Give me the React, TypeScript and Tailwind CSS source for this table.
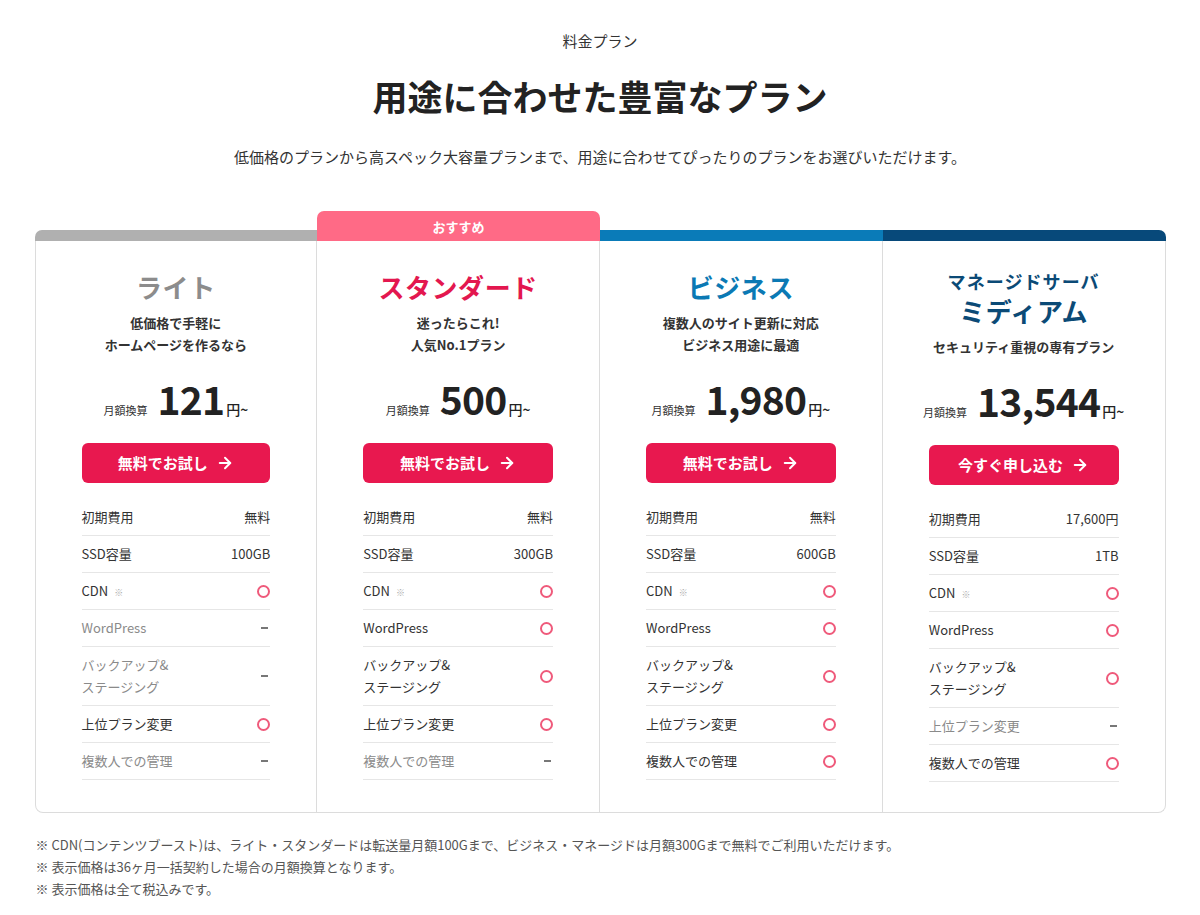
import { ArrowRight } from "lucide-react";

type Row = { label: string; value: string; muted?: boolean; note?: boolean };

type Plan = {
  top: string;
  badge?: string;
  sub?: string;
  title: string;
  titleClass: string;
  desc: string[];
  price: string;
  cta: string;
  colClass: string;
  rows: Row[];
};

const plans: Plan[] = [
  {
    top: "h-[11px] bg-[#b0b0b0] rounded-tl-[7px]",
    title: "ライト",
    titleClass: "text-[#8c8c8c]",
    desc: ["低価格で手軽に", "ホームページを作るなら"],
    price: "121",
    cta: "無料でお試し",
    colClass: "border-l rounded-bl-[8px]",
    rows: [
      { label: "初期費用", value: "無料" },
      { label: "SSD容量", value: "100GB" },
      { label: "CDN", value: "o", note: true },
      { label: "WordPress", value: "-", muted: true },
      { label: "バックアップ&\nステージング", value: "-", muted: true },
      { label: "上位プラン変更", value: "o" },
      { label: "複数人での管理", value: "-", muted: true },
    ],
  },
  {
    top: "h-[30px] bg-[#ff6a86] rounded-t-[7px]",
    badge: "おすすめ",
    title: "スタンダード",
    titleClass: "text-[#e3174f]",
    desc: ["迷ったらこれ!", "人気No.1プラン"],
    price: "500",
    cta: "無料でお試し",
    colClass: "",
    rows: [
      { label: "初期費用", value: "無料" },
      { label: "SSD容量", value: "300GB" },
      { label: "CDN", value: "o", note: true },
      { label: "WordPress", value: "o" },
      { label: "バックアップ&\nステージング", value: "o" },
      { label: "上位プラン変更", value: "o" },
      { label: "複数人での管理", value: "-", muted: true },
    ],
  },
  {
    top: "h-[11px] bg-[#0a7bb8]",
    title: "ビジネス",
    titleClass: "text-[#0b79b4]",
    desc: ["複数人のサイト更新に対応", "ビジネス用途に最適"],
    price: "1,980",
    cta: "無料でお試し",
    colClass: "",
    rows: [
      { label: "初期費用", value: "無料" },
      { label: "SSD容量", value: "600GB" },
      { label: "CDN", value: "o", note: true },
      { label: "WordPress", value: "o" },
      { label: "バックアップ&\nステージング", value: "o" },
      { label: "上位プラン変更", value: "o" },
      { label: "複数人での管理", value: "o" },
    ],
  },
  {
    top: "h-[11px] bg-[#07497a] rounded-tr-[7px]",
    sub: "マネージドサーバ",
    title: "ミディアム",
    titleClass: "text-[#0b4a76]",
    desc: ["セキュリティ重視の専有プラン"],
    price: "13,544",
    cta: "今すぐ申し込む",
    colClass: "rounded-br-[8px]",
    rows: [
      { label: "初期費用", value: "17,600円" },
      { label: "SSD容量", value: "1TB" },
      { label: "CDN", value: "o", note: true },
      { label: "WordPress", value: "o" },
      { label: "バックアップ&\nステージング", value: "o" },
      { label: "上位プラン変更", value: "-", muted: true },
      { label: "複数人での管理", value: "o" },
    ],
  },
];

function Mark({ value }: { value: string }) {
  if (value === "o") {
    return <span className="block h-[13px] w-[13px] rounded-full border-2 border-[#ef5a7b]" />;
  }
  if (value === "-") {
    return <span className="mr-[2px] block h-[1.5px] w-[7px] bg-[#777]" />;
  }
  return <span className="text-[13px] text-[#333]">{value}</span>;
}

function PlanColumn({ plan }: { plan: Plan }) {
  return (
    <div className="flex flex-col">
      <div className="flex h-[30px] flex-col justify-end">
        <div className={`${plan.top} flex items-center justify-center`}>
          {plan.badge && (
            <span className="text-[13px] font-bold leading-none text-white">{plan.badge}</span>
          )}
        </div>
      </div>
      <div
        className={`flex flex-1 flex-col border-r border-b border-[#dcdcdc] bg-white px-[46px] pt-[28px] pb-[30px] ${plan.colClass}`}
      >
        <div className="flex flex-col items-center text-center">
          {plan.sub && (
            <p className={`text-[18px] font-bold leading-[24px] tracking-[0.06em] ${plan.titleClass}`}>
              {plan.sub}
            </p>
          )}
          <h3 className={`text-[26px] font-bold leading-[36px] tracking-[0.02em] ${plan.titleClass}`}>
            {plan.title}
          </h3>
          <div className="mt-[7px] text-[13px] font-bold leading-[22px] text-[#333]">
            {plan.desc.map((d) => (
              <p key={d}>{d}</p>
            ))}
          </div>
          <div className="mt-[18px] flex h-[48px] items-baseline justify-center whitespace-nowrap text-[#222]">
            <span className="mr-[10px] text-[11px] text-[#333]">月額換算</span>
            <span className="text-[39px] font-bold leading-[48px] tracking-[-0.02em]">{plan.price}</span>
            <span className="ml-[2px] text-[14px] font-medium">円~</span>
          </div>
        </div>
        <button className="mt-[21px] flex h-[40px] w-full items-center justify-center rounded-[6px] bg-[#e8184f] text-[15px] font-bold text-white">
          {plan.cta}
          <ArrowRight size={18} strokeWidth={2.6} className="ml-[8px]" />
        </button>
        <ul className="mt-[16px]">
          {plan.rows.map((r) => (
            <li
              key={r.label}
              className="flex items-center justify-between border-b border-[#e6e6e6] py-[7px] text-[13px] leading-[22px]"
            >
              <span className={`whitespace-pre-line ${r.muted ? "text-[#8a8a8a]" : "text-[#333]"}`}>
                {r.label}
                {r.note && <span className="ml-[6px] align-middle text-[9px] leading-none text-[#aaa]">※</span>}
              </span>
              <Mark value={r.value} />
            </li>
          ))}
        </ul>
      </div>
    </div>
  );
}

export default function App() {
  return (
    <div className="min-h-screen bg-white font-['Noto_Sans_CJK_JP','Noto_Sans',sans-serif] text-[#333]">
      <main className="mx-auto w-[1131px] pt-[29px] pb-[20px]">
        <header className="text-center">
          <p className="text-[15px] leading-[24px] text-[#333]">料金プラン</p>
          <h2 className="mt-[19px] text-[35px] font-bold leading-[48px] text-[#222]">
            用途に合わせた豊富なプラン
          </h2>
          <p className="mt-[25px] text-[15px] leading-[24px] text-[#333]">
            低価格のプランから高スペック大容量プランまで、用途に合わせてぴったりのプランをお選びいただけます。
          </p>
        </header>

        <section className="mt-[42px] grid grid-cols-4">
          {plans.map((p) => (
            <PlanColumn key={p.title} plan={p} />
          ))}
        </section>

        <div className="mt-[21px] pl-[1px] text-[13px] leading-[22px] text-[#555]">
          <p>※ CDN(コンテンツブースト)は、ライト・スタンダードは転送量月額100Gまで、ビジネス・マネージドは月額300Gまで無料でご利用いただけます。</p>
          <p>※ 表示価格は36ヶ月一括契約した場合の月額換算となります。</p>
          <p>※ 表示価格は全て税込みです。</p>
        </div>
      </main>
    </div>
  );
}
